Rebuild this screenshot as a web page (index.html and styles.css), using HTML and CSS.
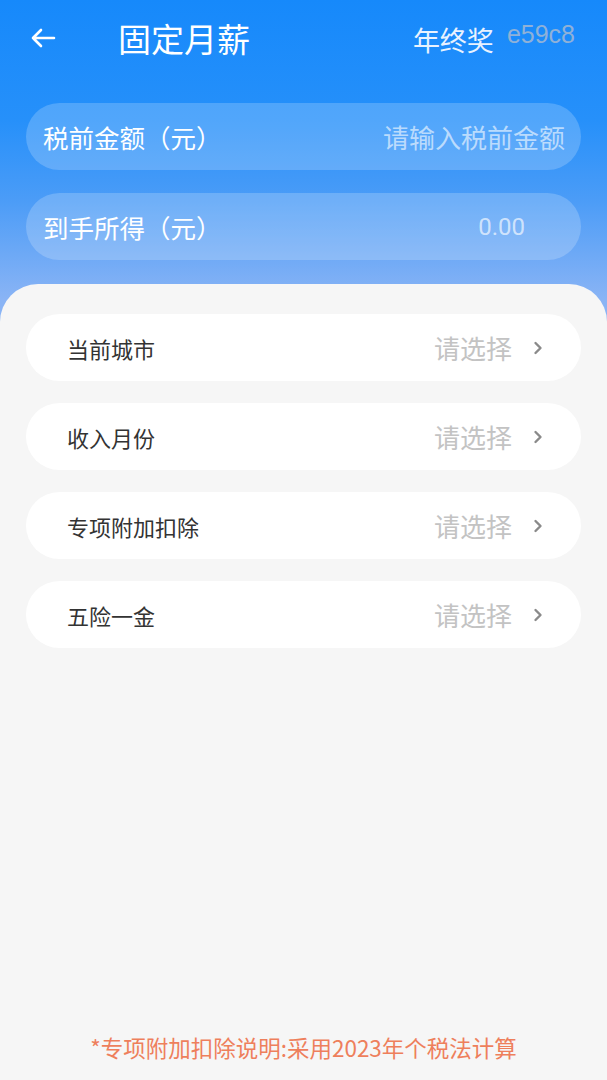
FILE: index.html
```html
<!DOCTYPE html>
<html lang="zh-CN">
<head>
<meta charset="utf-8">
<title>固定月薪</title>
<link rel="stylesheet" href="styles.css">
</head>
<body>
<div class="page">
  <header class="top">
    <div class="nav">
      <span class="back">
        <svg width="26" height="20" viewBox="0 0 26 20"><path d="M11 2 L3 10 L11 18 M3 10 H24" fill="none" stroke="#fff" stroke-width="2.6" stroke-linecap="round" stroke-linejoin="round"/></svg>
      </span>
      <span class="title">固定月薪</span>
      <span class="spacer"></span>
      <span class="tab">年终奖</span>
      <span class="code">e59c8</span>
    </div>
    <div class="inputs">
      <div class="field">
        <span class="flabel">税前金额（元）</span>
        <span class="fplace">请输入税前金额</span>
      </div>
      <div class="field">
        <span class="flabel">到手所得（元）</span>
        <span class="fvalue">0.00</span>
      </div>
    </div>
  </header>
  <main class="panel">
    <div class="rows">
      <div class="row"><span class="rlabel">当前城市</span><span class="rval">请选择</span><svg class="chev" width="10" height="14" viewBox="0 0 10 14"><path d="M2.5 2 L7.5 7 L2.5 12" fill="none" stroke="#8a8a8a" stroke-width="2.4" stroke-linecap="round" stroke-linejoin="round"/></svg></div>
      <div class="row"><span class="rlabel">收入月份</span><span class="rval">请选择</span><svg class="chev" width="10" height="14" viewBox="0 0 10 14"><path d="M2.5 2 L7.5 7 L2.5 12" fill="none" stroke="#8a8a8a" stroke-width="2.4" stroke-linecap="round" stroke-linejoin="round"/></svg></div>
      <div class="row"><span class="rlabel">专项附加扣除</span><span class="rval">请选择</span><svg class="chev" width="10" height="14" viewBox="0 0 10 14"><path d="M2.5 2 L7.5 7 L2.5 12" fill="none" stroke="#8a8a8a" stroke-width="2.4" stroke-linecap="round" stroke-linejoin="round"/></svg></div>
      <div class="row"><span class="rlabel">五险一金</span><span class="rval">请选择</span><svg class="chev" width="10" height="14" viewBox="0 0 10 14"><path d="M2.5 2 L7.5 7 L2.5 12" fill="none" stroke="#8a8a8a" stroke-width="2.4" stroke-linecap="round" stroke-linejoin="round"/></svg></div>
    </div>
    <p class="note">*专项附加扣除说明:采用2023年个税法计算</p>
  </main>
</div>
</body>
</html>
```
FILE: styles.css
```css
* { box-sizing: border-box; }
html, body { margin: 0; padding: 0; }
body {
  font-family: "Noto Sans CJK SC", "Noto Sans", sans-serif;
  background: #f6f6f6;
}
.page {
  width: 607px;
  height: 1080px;
  display: flex;
  flex-direction: column;
  background: linear-gradient(180deg, #1689fb 0px, #2690fa 120px, #4b9cf7 200px, #8ab4f5 300px, #8ab4f5 100%);
  overflow: hidden;
}
.top {
  padding: 0 26px;
}
.nav {
  height: 78px;
  display: flex;
  align-items: center;
  padding-bottom: 2px;
}
.back {
  width: 92px;
  padding-left: 4px;
  display: flex;
  align-items: center;
}
.title {
  color: #fff;
  font-size: 33px;
  line-height: 40px;
}
.spacer { flex: 1; }
.tab {
  color: #e8f2ff;
  font-size: 27px;
  line-height: 36px;
  margin-top: 4px;
}
.code {
  color: #8fb1d8;
  font-family: "Liberation Sans", Arial, sans-serif;
  font-size: 25px;
  margin-left: 13px;
  margin-right: 6px;
  margin-top: -8px;
}
.inputs {
  display: flex;
  flex-direction: column;
  gap: 23px;
  padding-top: 25px;
}
.field {
  height: 67px;
  border-radius: 34px;
  background: rgba(255, 255, 255, 0.2);
  display: flex;
  align-items: center;
  justify-content: space-between;
  padding: 0 16px 0 17px;
}
.flabel {
  color: #fff;
  font-size: 25.5px;
}
.fplace {
  color: rgba(255, 255, 255, 0.6);
  font-size: 26px;
}
.fvalue {
  color: rgba(255, 255, 255, 0.65);
  font-size: 24px;
  font-family: "Roboto", "Noto Sans", sans-serif;
  margin-right: 40px;
}
.panel {
  margin-top: 24px;
  flex: 1;
  background: #f6f6f6;
  border-radius: 38px 38px 0 0;
  padding: 30px 26px 0;
  display: flex;
  flex-direction: column;
}
.rows {
  display: flex;
  flex-direction: column;
  gap: 22px;
}
.row {
  height: 67px;
  background: #fff;
  border-radius: 34px;
  display: flex;
  align-items: center;
  padding: 0 38px 0 41px;
}
.rlabel {
  color: #333;
  font-size: 22px;
  flex: 1;
}
.rval {
  color: #c3c3c3;
  font-size: 26px;
  margin-right: 21px;
}
.chev { display: block; }
.note {
  margin: auto 0 18px;
  text-align: center;
  color: #ee7f5c;
  font-size: 22.5px;
  line-height: 30px;
}
```
